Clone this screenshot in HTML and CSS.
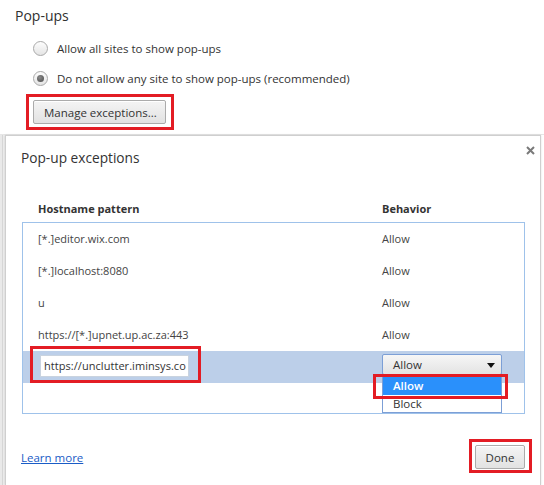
FILE: index.html
```html
<!DOCTYPE html>
<html>
<head>
<meta charset="utf-8">
<title>Pop-ups</title>
<link rel="stylesheet" href="styles.css">
</head>
<body>
<div class="page">
  <section class="settings">
    <h2 class="section-title">Pop-ups</h2>
    <label class="radio-row"><span class="radio"></span><span>Allow all sites to show pop-ups</span></label>
    <label class="radio-row"><span class="radio checked"></span><span>Do not allow any site to show pop-ups (recommended)</span></label>
    <div class="btn-row"><span class="marked mark-manage"><button class="btn">Manage exceptions...</button></span></div>
  </section>
  <div class="backdrop">
    <div class="strip"></div>
    <div class="dialog">
      <span class="close">
        <svg width="9" height="9" viewBox="0 0 9 9"><path d="M1 1L8 8M8 1L1 8" stroke="#7a7a7a" stroke-width="2"/></svg>
      </span>
      <h3 class="dialog-title">Pop-up exceptions</h3>
      <div class="list-head">
        <span>Hostname pattern</span>
        <span>Behavior</span>
      </div>
      <div class="list">
        <div class="row"><span>[*.]editor.wix.com</span><span>Allow</span></div>
        <div class="row"><span>[*.]localhost:8080</span><span>Allow</span></div>
        <div class="row"><span>u</span><span>Allow</span></div>
        <div class="row"><span>https://[*.]upnet.up.ac.za:443</span><span>Allow</span></div>
        <div class="row editing">
          <span class="cell-input"><span class="marked mark-input"><span class="text-input">https://unclutter.iminsys.co</span></span></span>
          <span class="cell-select">
            <span class="select">Allow<span class="arrow"></span></span>
            <span class="dropdown">
              <span class="marked mark-option"><span class="option active">Allow</span></span>
              <span class="option">Block</span>
            </span>
          </span>
        </div>
      </div>
      <div class="footer">
        <a class="link" href="#">Learn more</a>
        <span class="marked mark-done"><button class="btn done">Done</button></span>
      </div>
    </div>
  </div>
</div>
</body>
</html>
```
FILE: styles.css
```css
* { box-sizing: border-box; }
html, body { margin: 0; padding: 0; background: #fff; }
body {
  font-family: "Open Sans", "Noto Sans", sans-serif;
  font-size: 11px;
  color: #333;
}
.page { width: 544px; height: 485px; overflow: hidden; }

.settings {
  padding: 6px 0 10px 15px;
  border-bottom: 1px solid #e6e6e6;
  height: 135px;
}
.section-title {
  margin: 0 0 7px 0;
  font-size: 14px;
  font-weight: 400;
  line-height: 20px;
  color: #303030;
}
.radio-row {
  display: flex;
  align-items: center;
  height: 30px;
  padding-left: 18px;
  gap: 9px;
  font-size: 11.5px;
}
.radio {
  width: 15px;
  height: 15px;
  border-radius: 50%;
  border: 1px solid #a9a9a9;
  background: linear-gradient(#fdfdfd, #e4e4e4);
  display: flex;
  align-items: center;
  justify-content: center;
  flex: none;
}
.radio.checked::after {
  content: "";
  width: 7px;
  height: 7px;
  border-radius: 50%;
  background: radial-gradient(circle at 40% 35%, #8a8a8a, #4a4a4a);
}
.btn-row { margin-top: 7px; padding-left: 18px; display: flex; }

.btn {
  font: inherit;
  font-size: 11.5px;
  color: #333;
  height: 24px;
  padding: 0 10px;
  border: 1px solid #ababab;
  border-radius: 2px;
  background: linear-gradient(#f4f4f4, #e2e2e2);
  box-shadow: inset 0 1px 0 #fff;
  display: block;
  white-space: nowrap;
}
.settings .btn { width: 133px; text-align: left; padding-left: 10px; }

.marked { position: relative; display: inline-block; }
.marked::after {
  content: "";
  position: absolute;
  border: 3px solid #e31c24;
  pointer-events: none;
}
.mark-manage::after { left: -7px; right: -8px; top: -6px; bottom: -6px; }
.mark-input::after { left: -10px; right: -12px; top: -9px; bottom: -6px; }
.mark-option { display: block; }
.mark-option::after { left: -10px; right: -7px; top: -2px; bottom: -4px; z-index: 2; }
.mark-done::after { left: -6px; right: -7px; top: -6px; bottom: -4px; }

.backdrop { display: flex; height: 350px; }
.strip {
  width: 5px;
  flex: none;
  background: linear-gradient(90deg, #e9e9e9 0 2px, #d6d6d6 2px 3px, #ececec 3px);
}
.dialog {
  position: relative;
  flex: 1;
  margin-right: 3px;
  border: 1px solid #cfcfcf;
  border-bottom: none;
  box-shadow: 0 0 2px rgba(0,0,0,0.12);
  background: #fff;
  padding: 12px 15px 0 15px;
}
.close {
  position: absolute;
  top: 10px;
  right: 5px;
  display: block;
  line-height: 0;
}
.dialog-title {
  margin: 0;
  font-size: 13.7px;
  font-weight: 400;
  line-height: 20px;
  color: #333;
}
.list-head {
  margin-top: 31px;
  display: grid;
  grid-template-columns: 344px 1fr;
  padding-left: 17px;
  height: 20px;
  line-height: 20px;
  font-weight: 700;
  color: #333;
}
.list {
  margin: 3px 0 0 1px;
  border: 1px solid #9fc2ea;
  height: 192px;
}
.row {
  display: grid;
  grid-template-columns: 344px 1fr;
  padding-left: 15px;
  height: 32px;
  align-items: center;
  color: #444;
  padding-bottom: 1px;
}
.row.editing {
  background: #bccfe9;
  padding-left: 17px;
  padding-bottom: 0;
  position: relative;
  align-items: start;
}
.cell-input { padding-top: 4px; }
.text-input {
  display: block;
  width: 149px;
  height: 22px;
  line-height: 20px;
  padding: 0 2px 0 3px;
  background: #fff;
  border: 1px solid #c9d3df;
  overflow: hidden;
  white-space: nowrap;
  color: #333;
  font-size: 11px;
  letter-spacing: 0.05px;
}
.cell-select { position: relative; padding-top: 3px; margin-left: -2px; }
.select {
  display: block;
  position: relative;
  width: 120px;
  height: 21px;
  line-height: 19px;
  padding-left: 10px;
  border: 1px solid #7c9fd6;
  border-radius: 2px;
  background: linear-gradient(#f6f6f6, #e3e3e3);
  color: #333;
  font-size: 11.5px;
}
.arrow {
  position: absolute;
  right: 6px;
  top: 8px;
  width: 0;
  height: 0;
  border-left: 4px solid transparent;
  border-right: 4px solid transparent;
  border-top: 5px solid #111;
}
.dropdown {
  position: absolute;
  left: 0;
  top: 24px;
  width: 120px;
  height: 38px;
  background: #fff;
  border: 1px solid #7c9fd6;
  border-top: none;
  padding: 1px 0 0 0;
  z-index: 3;
  font-size: 11.5px;
}
.option {
  display: block;
  height: 18px;
  line-height: 18px;
  padding-left: 10px;
  color: #333;
}
.option.active {
  background: #2a90fb;
  color: #fff;
  font-weight: 600;
  height: 19px;
  line-height: 19px;
}
.footer {
  margin-top: 31px;
  display: flex;
  justify-content: space-between;
  align-items: center;
}
.link {
  color: #1a5cc6;
  text-decoration: underline;
  font-size: 11.5px;
}
.btn.done { width: 50px; padding: 0; text-align: center; }
```
